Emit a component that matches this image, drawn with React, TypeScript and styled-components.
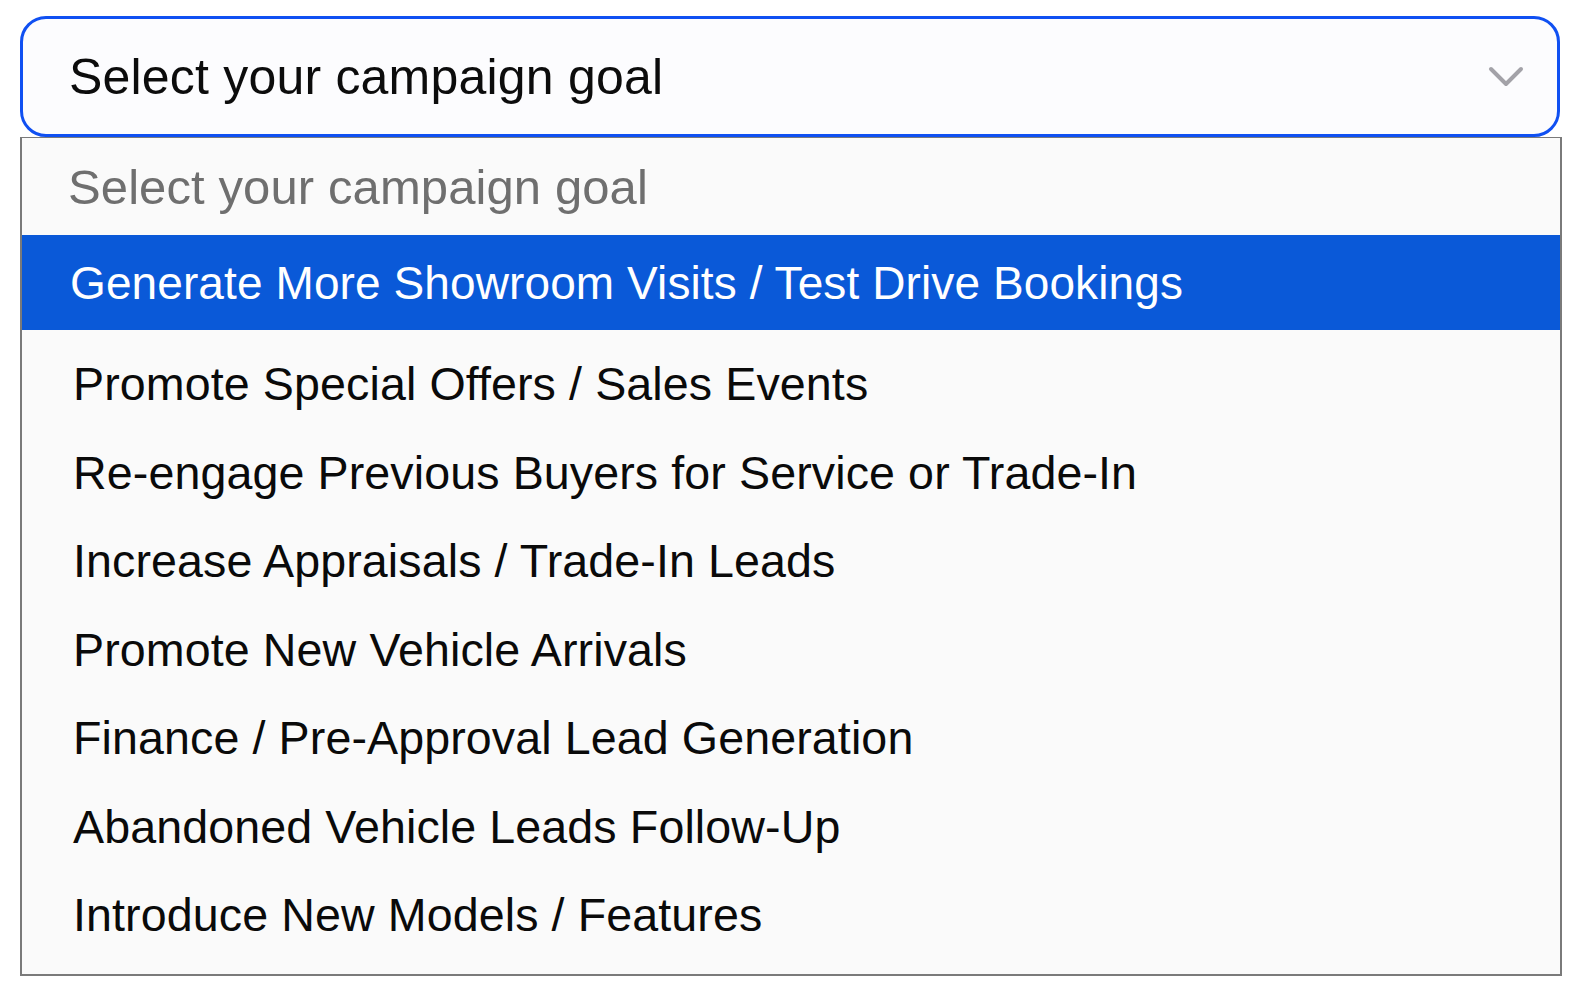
import React from "react";
import styled, { createGlobalStyle } from "styled-components";

const Global = createGlobalStyle`
  html, body { margin: 0; padding: 0; background: #ffffff; }
  body { font-family: "Liberation Sans", Arial, sans-serif; }
`;

const Page = styled.div`
  padding: 16px 0 0 20px;
  width: 1544px;
`;

const SelectBox = styled.div`
  box-sizing: border-box;
  height: 121px;
  width: 1540px;
  border: 3px solid #1050f2;
  border-radius: 26px;
  background: #fcfcfe;
  display: flex;
  align-items: center;
  justify-content: space-between;
  padding: 0 33px 0 46px;
`;

const SelectText = styled.span`
  font-size: 50px;
  color: #0c0c0c;
  letter-spacing: 0.2px;
`;

const Menu = styled.div`
  box-sizing: border-box;
  width: 1542px;
  height: 839px;
  border: 2px solid #7a7a7a;
  border-top-width: 1px;
  background: #fafafa;
  display: flex;
  flex-direction: column;
`;

const Option = styled.div<{ $h: number; $pad: number; $size: number; $active?: boolean; $muted?: boolean }>`
  height: ${(p) => p.$h}px;
  flex: none;
  display: flex;
  align-items: center;
  padding-left: ${(p) => p.$pad}px;
  font-size: ${(p) => p.$size}px;
  letter-spacing: 0.1px;
  background: ${(p) => (p.$active ? "#0a59d8" : "transparent")};
  color: ${(p) => (p.$active ? "#ffffff" : p.$muted ? "#6f6f6f" : "#0a0a0a")};
`;

const List = styled.div`
  padding-top: 10px;
  display: flex;
  flex-direction: column;
`;

const Chevron = () => (
  <svg width="36" height="22" viewBox="0 0 36 22" fill="none">
    <path d="M3 3 L18 18 L33 3" stroke="#a3a2a8" strokeWidth="4" strokeLinecap="round" strokeLinejoin="round" />
  </svg>
);

const options = [
  "Promote Special Offers / Sales Events",
  "Re-engage Previous Buyers for Service or Trade-In",
  "Increase Appraisals / Trade-In Leads",
  "Promote New Vehicle Arrivals",
  "Finance / Pre-Approval Lead Generation",
  "Abandoned Vehicle Leads Follow-Up",
  "Introduce New Models / Features",
];

export default function App() {
  return (
    <>
      <Global />
      <Page>
        <SelectBox>
          <SelectText>Select your campaign goal</SelectText>
          <Chevron />
        </SelectBox>
        <Menu>
          <Option $h={97} $pad={46} $size={49} $muted>Select your campaign goal</Option>
          <Option $h={95} $pad={48} $size={46} $active>Generate More Showroom Visits / Test Drive Bookings</Option>
          <List>
            {options.map((o) => (
              <Option key={o} $h={88.5} $pad={51} $size={46.6}>{o}</Option>
            ))}
          </List>
        </Menu>
      </Page>
    </>
  );
}
